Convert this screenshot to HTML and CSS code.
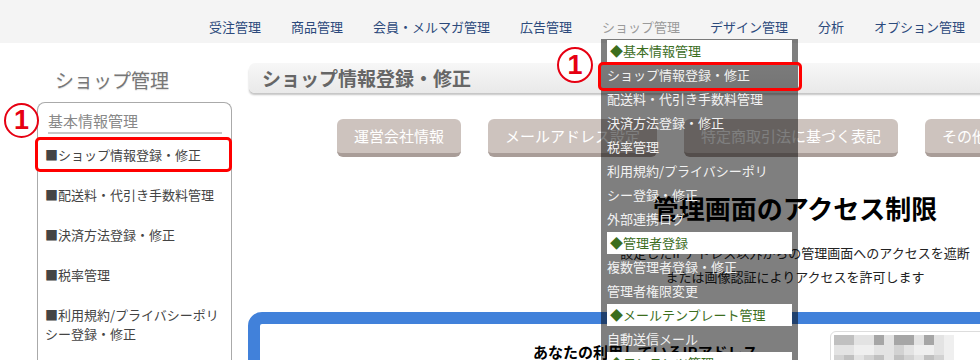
FILE: index.html
```html
<!DOCTYPE html>
<html lang="ja">
<head>
<meta charset="utf-8">
<title>ショップ管理</title>
<link rel="stylesheet" href="styles.css">
</head>
<body>
<header class="topbar">
  <nav class="gnav">
    <a class="gnav-item">受注管理</a>
    <a class="gnav-item">商品管理</a>
    <a class="gnav-item">会員・メルマガ管理</a>
    <a class="gnav-item">広告管理</a>
    <div class="gnav-item is-current">ショップ管理
      <div class="dropdown">
        <span class="callout callout-menu">1</span>
        <div class="dd-head">◆基本情報管理</div>
        <div class="dd-item dd-marked">ショップ情報登録・修正</div>
        <div class="dd-item">配送料・代引き手数料管理</div>
        <div class="dd-item">決済方法登録・修正</div>
        <div class="dd-item">税率管理</div>
        <div class="dd-item">利用規約/プライバシーポリ<br>シー登録・修正</div>
        <div class="dd-item">外部連携ログ</div>
        <div class="dd-head">◆管理者登録</div>
        <div class="dd-item">複数管理者登録・修正</div>
        <div class="dd-item">管理者権限変更</div>
        <div class="dd-head">◆メールテンプレート管理</div>
        <div class="dd-item">自動送信メール</div>
        <div class="dd-head">◆コンテンツ管理</div>
        <div class="dd-item">お知らせ管理</div>
      </div>
    </div>
    <a class="gnav-item">デザイン管理</a>
    <a class="gnav-item">分析</a>
    <a class="gnav-item">オプション管理</a>
  </nav>
</header>

<div class="page">
  <aside class="sidebar">
    <span class="callout callout-side">1</span>
    <h2 class="side-title">ショップ管理</h2>
    <div class="side-box">
      <div class="side-head">基本情報管理</div>
      <ul class="side-list">
        <li class="side-item marked">■ショップ情報登録・修正</li>
        <li class="side-item">■配送料・代引き手数料管理</li>
        <li class="side-item">■決済方法登録・修正</li>
        <li class="side-item">■税率管理</li>
        <li class="side-item">■利用規約/プライバシーポリ<br>シー登録・修正</li>
        <li class="side-item">■外部連携ログ</li>
      </ul>
    </div>
  </aside>

  <main class="main">
    <h1 class="title-bar">ショップ情報登録・修正</h1>
    <div class="tabs">
      <span class="tab">運営会社情報</span>
      <span class="tab">メールアドレス設定</span>
      <span class="tab">特定商取引法に基づく表記</span>
      <span class="tab">その他の設定</span>
    </div>
    <section class="access">
      <h2 class="access-title">管理画面のアクセス制限</h2>
      <p class="access-text">設定したIPアドレス以外からの管理画面へのアクセスを遮断<br>または画像認証によりアクセスを許可します</p>
    </section>
    <div class="ipbox">
      <div class="ip-label">あなたの利用しているIPアドレス</div>
      <div class="ip-mosaic">
        <span class="s2"></span><span class="s2"></span><span class="s4"></span><span class="s4"></span><span class="s1"></span><span class="s4"></span><span class="s1"></span><span class="s1"></span><span class="s4"></span><span class="s1"></span><span class="s4"></span><span class="s5"></span>
        <span class="s4"></span><span class="s4"></span><span class="s5"></span><span class="s5"></span><span class="s4"></span><span class="s4"></span><span class="s3"></span><span class="s4"></span><span class="s5"></span><span class="s5"></span><span class="s4"></span><span class="s5"></span>
        <span class="s3"></span><span class="s2"></span><span class="s4"></span><span class="s3"></span><span class="s2"></span><span class="s4"></span><span class="s2"></span><span class="s3"></span><span class="s4"></span><span class="s2"></span><span class="s3"></span><span class="s5"></span>
      </div>
    </div>
  </main>
</div>
</body>
</html>
```
FILE: styles.css
```css
html, body {
  margin: 0;
  overflow: hidden;
}
body {
  width: 980px;
  background: #fff;
  color: #333;
  font-family: "Noto Sans CJK JP", "Noto Sans", sans-serif;
}

/* top navigation */
.topbar {
  position: relative;
  z-index: 10;
  height: 43px;
  background: #f4f4f4;
}
.gnav {
  display: flex;
  justify-content: flex-end;
  gap: 30px;
  padding: 18px 15px 0 0;
  font-size: 13px;
  line-height: 18px;
}
.gnav-item {
  position: relative;
  color: #2c4a7c;
  white-space: nowrap;
}
.gnav-item.is-current {
  color: #9a9a9a;
}

/* dropdown menu */
.dropdown {
  position: absolute;
  top: 21px;
  left: -1px;
  width: 197px;
  background: rgba(0, 0, 0, 0.5);
}
.dd-head {
  margin: 1px 6px;
  height: 22px;
  line-height: 22px;
  padding-left: 3px;
  background: #fff;
  color: #3c6e1e;
}
.dd-item {
  position: relative;
  padding-left: 6px;
  line-height: 24px;
  color: #f2f2f2;
}
.dd-marked::after {
  content: "";
  position: absolute;
  left: -3px;
  right: -4px;
  top: -1px;
  bottom: -4px;
  border: 3px solid #f00;
  border-radius: 5px;
}

/* callout markers */
.callout {
  position: absolute;
  z-index: 5;
  box-sizing: border-box;
  border: 2px solid #e60012;
  border-radius: 50%;
  background: #fff;
  color: #e60012;
  font-family: "Liberation Sans", sans-serif;
  font-weight: bold;
  text-align: center;
}
.callout-menu {
  left: -44px;
  top: 8px;
  width: 36px;
  height: 36px;
  font-size: 27px;
  line-height: 32px;
}
.callout-side {
  left: 4px;
  top: 60px;
  width: 35px;
  height: 35px;
  font-size: 27px;
  line-height: 31px;
}

/* layout */
.page {
  display: flex;
  align-items: flex-start;
}
.sidebar {
  position: relative;
  flex: none;
  width: 232px;
}
.side-title {
  margin: 25px 0 10px 55px;
  font-size: 19px;
  line-height: 24px;
  font-weight: normal;
  color: #777;
  text-shadow: 0 1px 1px #ddd;
}
.side-box {
  margin-left: 37px;
  height: 300px;
  border: 1px solid #aaa;
  border-bottom: 0;
  border-radius: 8px 8px 0 0;
}
.side-head {
  margin: 0 9px 0 10px;
  padding-top: 7px;
  font-size: 15px;
  line-height: 22px;
  color: #888;
  border-bottom: 2px solid #c8c8c8;
}
.side-list {
  list-style: none;
  margin: 0;
  padding: 0;
}
.side-item {
  position: relative;
  padding: 11px 0 10px 7px;
  font-size: 13px;
  line-height: 19px;
  color: #444;
}
.side-item.marked::after {
  content: "";
  position: absolute;
  left: -3px;
  right: -1px;
  top: 3px;
  bottom: 2px;
  border: 3px solid #f00;
  border-radius: 5px;
}

/* main */
.main {
  flex: none;
  width: 1096px;
  margin-left: 15px;
}
.title-bar {
  margin: 20px 0 0 2px;
  height: 30px;
  padding-left: 13px;
  line-height: 30px;
  border-radius: 6px;
  background: linear-gradient(#f7f7f7, #e9e9e9);
  box-shadow: -1px 3px 2px -1px #c4c4c4;
  font-size: 19px;
  font-weight: bold;
  color: #666;
}
.tabs {
  display: flex;
  gap: 27px;
  margin-top: 26px;
  padding-left: 90px;
}
.tab {
  height: 34px;
  padding: 0 17px;
  line-height: 34px;
  background: #cdc3be;
  border-bottom: 4px solid #a99d98;
  border-radius: 6px;
  color: #fff;
  font-size: 15px;
  white-space: nowrap;
}
.access {
  text-align: center;
}
.access-title {
  margin: 35px 0 0;
  font-size: 26px;
  line-height: 32px;
  font-weight: bold;
  color: #000;
}
.access-text {
  margin: 17px 0 0;
  font-size: 13px;
  line-height: 24px;
  color: #222;
}
.ipbox {
  display: flex;
  align-items: flex-start;
  height: 120px;
  margin: 23px 0 0 1px;
  border: 12px solid #4181da;
  border-radius: 14px;
}
.ip-label {
  box-sizing: border-box;
  width: 570px;
  padding: 17px 0 0 273px;
  font-size: 15px;
  line-height: 22px;
  font-weight: bold;
  color: #000;
  white-space: nowrap;
}
.ip-mosaic {
  display: grid;
  grid-template-columns: repeat(12, 10px);
  grid-auto-rows: 10px;
  margin-top: 7px;
  padding: 3px 40px 3px 3px;
  border: 1px solid #ddd;
  border-radius: 6px;
}
.s1 { background: #a6a6a6; }
.s2 { background: #c0c0c0; }
.s3 { background: #d2d2d2; }
.s4 { background: #e3e3e3; }
.s5 { background: #efefef; }
```
